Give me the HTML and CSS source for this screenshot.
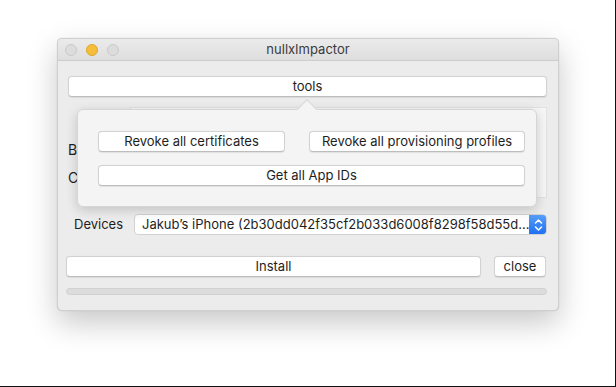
FILE: index.html
```html
<!DOCTYPE html>
<html lang="en">

<head>
    <meta charset="UTF-8">
    <title>nullxImpactor</title>
    <link rel="stylesheet" href="styles.css">
</head>

<body>
    <div class="screen">
        <div class="window">
            <div class="titlebar">
                <div class="lights">
                    <span class="light"></span>
                    <span class="light yellow"></span>
                    <span class="light"></span>
                </div>
                <div class="title">nullxImpactor</div>
                <div></div>
            </div>

            <div class="content">
                <button class="btn wide">tools</button>

                <!-- form hidden behind the popover -->
                <div class="form">
                    <div class="labels">
                        <span>B</span>
                        <span>C</span>
                    </div>
                    <div class="form-box"></div>
                </div>

                <div class="row devices">
                    <span class="label">Devices</span>
                    <div class="select">
                        <span class="select-text">Jakub’s iPhone (2b30dd042f35cf2b033d6008f8298f58d55d...</span>
                        <span class="stepper">
                            <svg width="9" height="14" viewBox="0 0 9 14">
                                <path d="M1.5 5 L4.5 2 L7.5 5" fill="none" stroke="#fff" stroke-width="1.5" stroke-linecap="round" stroke-linejoin="round"/>
                                <path d="M1.5 9 L4.5 12 L7.5 9" fill="none" stroke="#fff" stroke-width="1.5" stroke-linecap="round" stroke-linejoin="round"/>
                            </svg>
                        </span>
                    </div>
                </div>

                <div class="row actions">
                    <button class="btn install">Install</button>
                    <button class="btn close">close</button>
                </div>

                <div class="progress"></div>

                <!-- tools popover -->
                <div class="popover">
                    <span class="arrow"></span>
                    <button class="btn">Revoke all certificates</button>
                    <button class="btn">Revoke all provisioning profiles</button>
                    <button class="btn span2">Get all App IDs</button>
                </div>
            </div>
        </div>
    </div>
</body>

</html>
```

FILE: styles.css
```css
* {
    box-sizing: border-box;
}

body {
    margin: 0;
    font-family: Inter, "Liberation Sans", sans-serif;
    font-size: 13px;
    color: #1e1e1e;
    background-color: #ffffff;
}

.screen {
    width: 616px;
    height: 387px;
    padding: 38px 0 0 57px;
    border-right: 1px solid #111;
    border-bottom: 1px solid #111;
    background-color: #ffffff;
    overflow: hidden;
}

.window {
    width: 502px;
    height: 273px;
    background-color: #ececec;
    border: 1px solid #cfcfcf;
    border-radius: 5px;
    box-shadow: 0 12px 30px rgba(0, 0, 0, 0.22), 0 0 1px rgba(0, 0, 0, 0.2);
    overflow: hidden;
}

.titlebar {
    height: 22px;
    display: grid;
    grid-template-columns: 1fr auto 1fr;
    align-items: center;
    background: linear-gradient(#ebebeb, #dedede);
    border-bottom: 1px solid #cdcdcd;
}

.lights {
    display: flex;
    gap: 9px;
    padding-left: 7px;
}

.light {
    width: 12px;
    height: 12px;
    border-radius: 50%;
    background-color: #dcdcdc;
    border: 1px solid #c9c9c9;
}

.light.yellow {
    background-color: #f6bd3a;
    border-color: #e0a72a;
}

.title {
    color: #3b3b3b;
    font-size: 13px;
    padding-bottom: 1px;
}

.content {
    position: relative;
    padding: 15px 11px 0 10px;
}

.btn {
    font-family: inherit;
    font-size: 13px;
    line-height: 18px;
    color: #1e1e1e;
    height: 21px;
    padding: 0 8px 1px;
    background-color: #ffffff;
    border: 1px solid #d2d2d2;
    border-bottom-color: #bdbdbd;
    border-radius: 4px;
    box-shadow: 0 0.5px 1px rgba(0, 0, 0, 0.08);
    white-space: nowrap;
}

.btn.wide {
    width: 100%;
    display: block;
}

.form {
    margin-top: 10px;
    height: 91px;
    display: flex;
}

.labels {
    width: 62px;
    display: flex;
    flex-direction: column;
    padding-top: 34px;
    gap: 11px;
    font-size: 14px;
}

.form-box {
    flex: 1;
    background-color: #f6f6f6;
    border: 1px solid #e2e2e2;
}

.row {
    display: flex;
    align-items: center;
}

.devices {
    margin-top: 16px;
}

.label {
    width: 66px;
    padding-left: 6px;
    padding-bottom: 2px;
}

.select {
    flex: 1;
    height: 21px;
    display: flex;
    align-items: center;
    background-color: #ffffff;
    border: 1px solid #d2d2d2;
    border-radius: 4px;
    overflow: hidden;
}

.select-text {
    flex: 1;
    padding-left: 7px;
    padding-bottom: 1px;
    white-space: nowrap;
    overflow: hidden;
}

.stepper {
    width: 18px;
    height: 21px;
    margin: -1px -1px -1px 0;
    display: flex;
    align-items: center;
    justify-content: center;
    background: linear-gradient(#5aa0fa, #1c6ef2);
    border-radius: 0 4px 4px 0;
}

.actions {
    margin-top: 21px;
    margin-left: -2px;
    gap: 13px;
}

.install {
    width: 415px;
}

.close {
    width: 52px;
}

.progress {
    margin: 11px 0 0 -2px;
    height: 7px;
    background-color: #dcdcdc;
    border: 1px solid #d0d0d0;
    border-radius: 4px;
}

.popover {
    position: absolute;
    top: 48px;
    left: 19px;
    width: 460px;
    height: 98px;
    padding: 21px 11px 0 20px;
    display: grid;
    grid-template-columns: 187px 1fr;
    grid-auto-rows: 21px;
    gap: 13px 24px;
    background-color: #f4f4f4;
    border: 1px solid #d6d6d6;
    border-radius: 6px;
    box-shadow: 0 3px 12px rgba(0, 0, 0, 0.18);
}

.popover .btn {
    height: 21px;
}

.span2 {
    grid-column: span 2;
}

.arrow {
    position: absolute;
    top: -8px;
    left: 222px;
    width: 14px;
    height: 14px;
    background-color: #f4f4f4;
    border-top: 1px solid #d6d6d6;
    border-left: 1px solid #d6d6d6;
    transform: rotate(45deg);
}
```
